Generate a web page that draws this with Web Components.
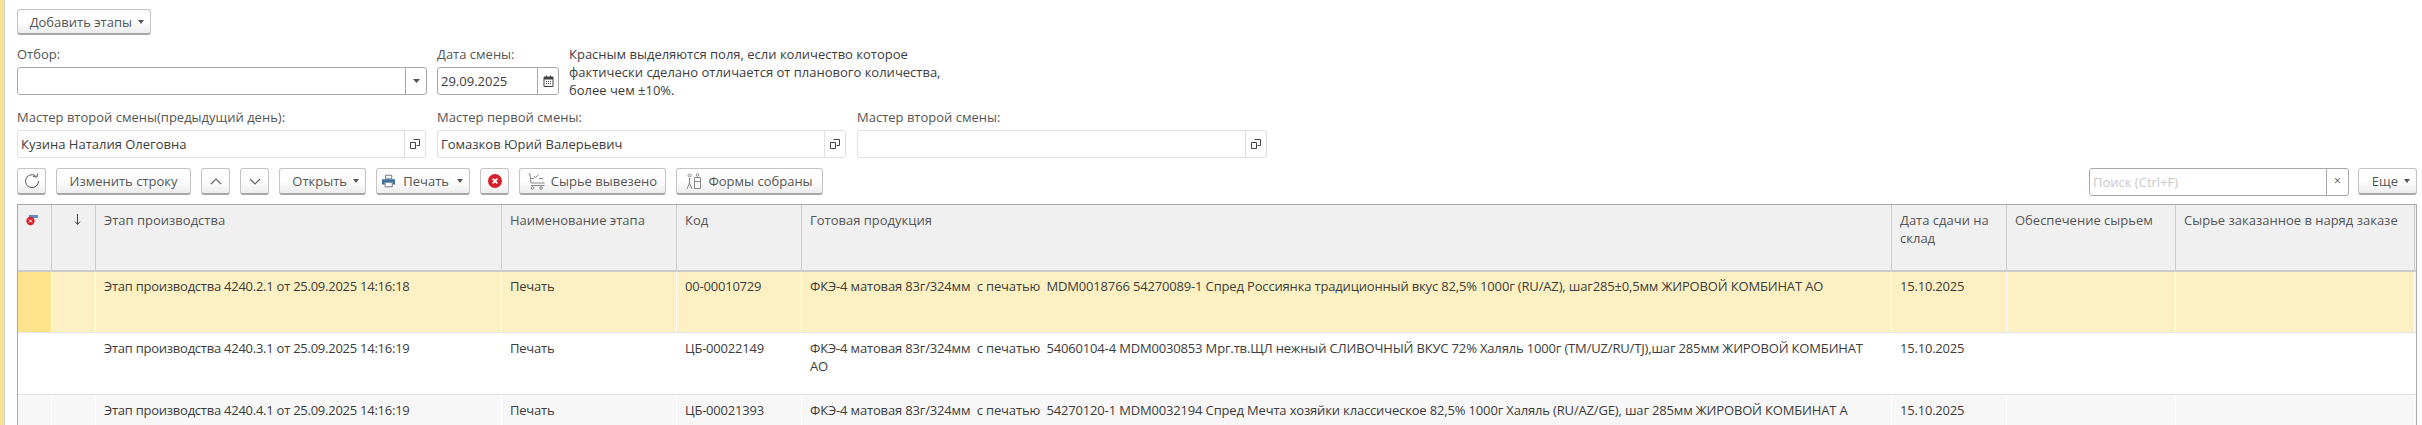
<!DOCTYPE html>
<html lang="ru"><head><meta charset="utf-8"><title>Этапы</title>
<style>
html,body{margin:0;height:100%;overflow:hidden;background:#fff}
body{font:13px/18px "Open Sans","Noto Sans",sans-serif;color:#4b4b4b}
</style></head><body>
<template id="t-btn"><style>
:host{display:inline-flex;box-sizing:border-box;height:27px;align-items:center;justify-content:center;gap:6px;border:1px solid #c4c4c4;border-bottom:2px solid #a8a8a8;border-radius:3px;background:linear-gradient(#fff 0,#fff 45%,#ededed 100%);color:#555;font-size:13px;white-space:nowrap;flex:none;padding:0 5px}
:host([menu]){justify-content:flex-end;padding-right:6px}
:host([wide]){gap:8px}
svg{display:block;flex:none}
.caret{width:0;height:0;border:3px solid transparent;border-top:4px solid #555;border-bottom:0}
:host(:not([menu])) .caret{display:none}
</style><slot name="icon"></slot><slot></slot><span class="caret"></span></template>

<template id="t-field"><style>
:host{display:flex;flex-direction:column;flex:none}
label{height:21px;line-height:21px;color:#555;font-size:13px;margin-bottom:2px;white-space:nowrap}
.box{box-sizing:border-box;height:28px;display:flex;align-items:stretch;border:1px solid #a9a9a9;border-radius:3px;background:#fff}
:host([soft]) .box{border-color:#e0e0e0}
.val{flex:1;min-width:0;padding:0 3px;line-height:27px;color:#3c3c3c;white-space:nowrap;overflow:hidden}
.ico{flex:none;width:20px;display:flex;align-items:center;justify-content:center;border-left:1px solid #a9a9a9}
:host([soft]) .ico{border-left-color:#e0e0e0}
</style><label><slot name="label"></slot></label><div class="box"><div class="val"><slot></slot></div><div class="ico"><slot name="icon"></slot></div></div></template>

<template id="t-cell"><style>
:host{display:block;box-sizing:border-box;min-width:0;padding:var(--pad,6px) 8px 0 8px;border-right:1px solid var(--sep,#fff);overflow:hidden;white-space:pre-wrap}
:host([product]){padding-right:12px;letter-spacing:-.16px}
:host([name]){letter-spacing:-.25px}
</style><slot></slot></template>

<template id="t-row"><style>
:host{display:grid;grid-template-columns:var(--cols);box-sizing:border-box;height:var(--h,62px);border-bottom:1px solid #e4e4e8;background:var(--bg,#fff);line-height:18px;color:#3c3c3c;font-size:13px;letter-spacing:-.2px}
</style><slot></slot></template>

<template id="t-toolbar"><style>
:host{display:flex;gap:10px;align-items:flex-start;height:27px}
</style><slot></slot></template>

<template id="t-app"><style>
:host{display:flex;box-sizing:border-box;height:425px;width:100%;border-left:4px solid #f7e38f;overflow:hidden}
.in{flex:1;min-width:0;padding:9px 5px 0 13px;box-shadow:inset 1px 0 0 #d0d0d0;display:flex;flex-direction:column}
</style><div class="in"><slot></slot></div></template>

<template id="t-table"><style>
:host{display:block;margin-top:9px;border:1px solid #a9a9a9;border-bottom:0;--cols:34px 44px 406px 175px 125px 1090px 115px 169px 239px;overflow:hidden}
</style><slot></slot></template>

<template id="t-head"><style>
:host{display:grid;grid-template-columns:var(--cols);height:67px;background:#f0f0f0;border-bottom:2px solid #ccc;box-sizing:border-box;color:#555;font-size:13px;line-height:18px;--sep:#ccc;--pad:6px}
</style><slot></slot></template>

<template id="t-stack"><style>
:host{display:flex;gap:10px;align-items:flex-start}
</style><slot></slot></template>

<script>
function reg(n,t){customElements.define(n,class extends HTMLElement{constructor(){super();this.attachShadow({mode:'open'}).appendChild(document.getElementById(t).content.cloneNode(true))}})}
reg('ui-app','t-app');reg('ui-btn','t-btn');reg('ui-field','t-field');reg('ui-cell','t-cell');reg('ui-row','t-row');reg('ui-toolbar','t-toolbar');reg('ui-table','t-table');reg('ui-head','t-head');reg('ui-stack','t-stack');
</script>

<svg width="0" height="0" style="position:absolute"><defs>
<symbol id="i-link" viewBox="0 0 10 10"><path d="M3.500.5h6v6h-3M.5 3.500h5v6h-5z" fill="none" stroke="#444"/></symbol>
</defs></svg>

<ui-app>
<ui-btn menu style="width:134px;height:26px">Добавить этапы</ui-btn>
<ui-stack style="margin-top:9px;height:51px">
 <ui-field style="width:410px"><span slot="label">Отбор:</span><svg slot="icon" width="7" height="4"><path d="M0 0h7L3.500 4z" fill="#555"/></svg></ui-field>
 <ui-field style="width:122px"><span slot="label">Дата смены:</span>29.09.2025<svg slot="icon" width="11" height="12" viewBox="0 0 11 12"><path d="M1 2h9v9.500H1z" fill="none" stroke="#444"/><path d="M1 2h9v2.500H1zM3 .5h1v2H3zM7 .5h1v2H7zM3 6h1v1H3zM5 6h1v1H5zM7 6h1v1H7zM3 8h1v1H3zM5 8h1v1H5zM7 8h1v1H7z" fill="#444"/></svg></ui-field>
 <div style="width:400px;font-size:13px;color:#3c3c3c;line-height:18px;margin-top:1px">Красным выделяются поля, если количество которое фактически сделано отличается от планового количества, более чем ±10%.</div>
</ui-stack>
<ui-stack style="margin-top:12px">
 <ui-field soft style="width:409px"><span slot="label">Мастер второй смены(предыдущий день):</span>Кузина Наталия Олеговна<svg slot="icon" width="10" height="10"><use href="#i-link"/></svg></ui-field>
 <ui-field soft style="width:409px;margin-left:1px"><span slot="label">Мастер первой смены:</span>Гомазков Юрий Валерьевич<svg slot="icon" width="10" height="10"><use href="#i-link"/></svg></ui-field>
 <ui-field soft style="width:410px;margin-left:1px"><span slot="label">Мастер второй смены:</span><svg slot="icon" width="10" height="10"><use href="#i-link"/></svg></ui-field>
</ui-stack>
<ui-toolbar style="margin-top:10px">
 <ui-btn style="width:29px"><svg slot="icon" width="16" height="16" viewBox="0 0 16 16"><path d="M11.500 2.700A6.500 6.500 0 1 0 14.500 8" fill="none" stroke="#555"/><path d="M9 3.500l4 .5.500-3.500" fill="none" stroke="#555"/></svg></ui-btn>
 <ui-btn style="width:135px">Изменить строку</ui-btn>
 <ui-btn style="width:29px"><svg slot="icon" width="12" height="7" viewBox="0 0 12 7"><path d="M1 6l5-5 5 5" fill="none" stroke="#666" stroke-width="1.200"/></svg></ui-btn>
 <ui-btn style="width:29px"><svg slot="icon" width="12" height="7" viewBox="0 0 12 7"><path d="M1 1l5 5 5-5" fill="none" stroke="#666" stroke-width="1.200"/></svg></ui-btn>
 <ui-btn menu style="width:87px">Открыть</ui-btn>
 <ui-btn menu wide style="width:94px"><svg slot="icon" width="15" height="14" viewBox="0 0 15 14"><path d="M4 .5h7v4H4z" fill="#fff" stroke="#5a6f86"/><path d="M0 5h15v6h-3V8H3v3H0z" fill="#3f6f9f"/><path d="M3.500 8.500h8v5h-8z" fill="#fff" stroke="#5a6f86"/></svg>Печать</ui-btn>
 <ui-btn style="width:29px"><svg slot="icon" width="14" height="14" viewBox="0 0 14 14"><circle cx="7" cy="7" r="7" fill="#d8202c"/><path d="M4.700 4.700l4.600 4.600M9.300 4.700l-4.600 4.600" stroke="#fff" stroke-width="1.800"/></svg></ui-btn>
 <ui-btn style="width:147px"><svg slot="icon" width="17" height="17" viewBox="0 0 17 17"><path d="M.5 1H2l1 9h13.500M3 12.500h13.500M3 5.500h3M11 5.500h4M6 3l1.500 2 3-3.500" fill="none" stroke="#888"/><circle cx="4.500" cy="15" r="1.300" fill="none" stroke="#888"/><circle cx="13" cy="15" r="1.300" fill="none" stroke="#888"/></svg>Сырье вывезено</ui-btn>
 <ui-btn style="width:147px"><svg slot="icon" width="16" height="17" viewBox="0 0 16 17"><circle cx="3.500" cy="2.500" r="1.500" fill="none" stroke="#888"/><path d="M3.500 5v5L1 16M3.500 10L6 16" fill="none" stroke="#888"/><path d="M8.500 4.500h6v4h-6zM8.500 8.500h6v7h-6z" fill="none" stroke="#888"/><circle cx="11.500" cy="2" r="1.300" fill="none" stroke="#888"/></svg>Формы собраны</ui-btn>
 <span style="flex:1"></span>
 <div style="box-sizing:border-box;width:260px;height:28px;display:flex;border:1px solid #a9a9a9;border-radius:3px;margin-right:-1px"><span style="flex:1;color:#c8c8c8;line-height:26px;padding-left:3px">Поиск (Ctrl+F)</span><span style="width:21px;border-left:1px solid #a9a9a9;text-align:center;line-height:24px;color:#555;font-size:12px">×</span></div>
 <ui-btn menu style="width:59px">Еще</ui-btn>
</ui-toolbar>
<ui-table>
 <ui-head>
  <ui-cell><svg width="13" height="13" viewBox="0 0 13 13" style="display:block;margin:3px 0 0 0"><rect x="3" y="1" width="9" height="3" fill="#5a8fc8"/><circle cx="4.500" cy="7" r="4.200" fill="#d8202c"/><path d="M3 5.500l3 3M6 5.500l-3 3" stroke="#fff"/></svg></ui-cell>
  <ui-cell style="padding-left:22px"><svg width="7" height="11" viewBox="0 0 7 11" style="display:block;margin-top:3px"><path d="M3.500 0v10M1 7.500l2.500 3 2.500-3" fill="none" stroke="#444"/></svg></ui-cell>
  <ui-cell>Этап производства</ui-cell><ui-cell>Наименование этапа</ui-cell><ui-cell>Код</ui-cell><ui-cell>Готовая продукция</ui-cell><ui-cell>Дата сдачи на склад</ui-cell><ui-cell>Обеспечение сырьем</ui-cell><ui-cell>Сырье заказанное в наряд заказе</ui-cell>
 </ui-head>
 <ui-row style="--bg:#fdf1c3;--h:61px;--pad:5px"><ui-cell style="background:#fee38d"></ui-cell><ui-cell></ui-cell><ui-cell name>Этап производства 4240.2.1 от 25.09.2025 14:16:18</ui-cell><ui-cell>Печать</ui-cell><ui-cell>00-00010729</ui-cell><ui-cell product>ФКЭ-4 матовая 83г/324мм  с печатью  MDM0018766 54270089-1 Спред Россиянка традиционный вкус 82,5% 1000г (RU/AZ), шаг285±0,5мм ЖИРОВОЙ КОМБИНАТ АО</ui-cell><ui-cell>15.10.2025</ui-cell><ui-cell></ui-cell><ui-cell></ui-cell></ui-row>
 <ui-row><ui-cell></ui-cell><ui-cell></ui-cell><ui-cell name>Этап производства 4240.3.1 от 25.09.2025 14:16:19</ui-cell><ui-cell>Печать</ui-cell><ui-cell>ЦБ-00022149</ui-cell><ui-cell product>ФКЭ-4 матовая 83г/324мм  с печатью  54060104-4 MDM0030853 Мрг.тв.ЩЛ нежный СЛИВОЧНЫЙ ВКУС 72% Халяль 1000г (TM/UZ/RU/TJ),шаг 285мм ЖИРОВОЙ КОМБИНАТ АО</ui-cell><ui-cell>15.10.2025</ui-cell><ui-cell></ui-cell><ui-cell></ui-cell></ui-row>
 <ui-row style="--bg:#f7f7f7"><ui-cell></ui-cell><ui-cell></ui-cell><ui-cell name>Этап производства 4240.4.1 от 25.09.2025 14:16:19</ui-cell><ui-cell>Печать</ui-cell><ui-cell>ЦБ-00021393</ui-cell><ui-cell product>ФКЭ-4 матовая 83г/324мм  с печатью  54270120-1 MDM0032194 Спред Мечта хозяйки классическое 82,5% 1000г Халяль (RU/AZ/GE), шаг 285мм ЖИРОВОЙ КОМБИНАТ А</ui-cell><ui-cell>15.10.2025</ui-cell><ui-cell></ui-cell><ui-cell></ui-cell></ui-row>
</ui-table>
</ui-app>
</body></html>
